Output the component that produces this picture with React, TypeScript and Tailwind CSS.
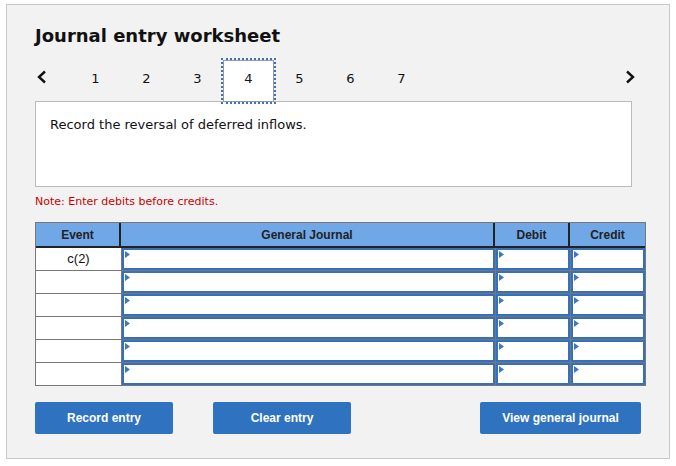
import React from 'react';

const verdana = { fontFamily: '"DejaVu Sans", Verdana, sans-serif' };
const arial = { fontFamily: '"Liberation Sans", Arial, sans-serif' };

const Marker: React.FC = () => (
  <svg className="absolute left-[1px] top-[1px]" width="6" height="8" viewBox="0 0 6 8">
    <polygon points="0,0 5,3.5 0,7" fill="#3a78c8" />
  </svg>
);

const InputCell: React.FC = () => (
  <div className="relative h-[22px] bg-white border-2 border-[#3570bd]">
    <Marker />
  </div>
);

const Chevron: React.FC<{ dir: 'left' | 'right' }> = ({ dir }) => (
  <svg width="12" height="14" viewBox="0 0 12 14">
    <polyline
      points={dir === 'left' ? '9,1.5 3,7 9,12.5' : '3,1.5 9,7 3,12.5'}
      fill="none"
      stroke="#111"
      strokeWidth="2.4"
    />
  </svg>
);

export default function App() {
  const tabs = [1, 2, 3, 4, 5, 6, 7];
  const rows = ['c(2)', '', '', '', '', ''];

  return (
    <div className="bg-white w-[676px] h-[466px] pt-[4px] pl-[6px]">
      <div className="w-[664px] h-[455px] border border-[#c8c8c8] bg-[#f2f2f2] pl-[28px] pt-[20px]">
        <h1 className="text-[18px] leading-[22px] font-bold text-[#111]" style={verdana}>
          Journal entry worksheet
        </h1>

        <div className="flex items-center h-[42px] mt-[13px]" style={verdana}>
          <div className="w-[35px] flex items-center pl-[1px] -mt-[8px]">
            <Chevron dir="left" />
          </div>
          {tabs.map(t =>
            t === 4 ? (
              <div
                key={t}
                className="w-[51px] h-[42px] flex items-center justify-center pb-[5px] bg-white border border-[#999] outline-2 outline-dotted outline-[#3a70c4] text-[13px] text-[#111]"
              >
                {t}
              </div>
            ) : (
              <div key={t} className="w-[51px] -mt-[5px] text-center text-[13px] text-[#111]">
                {t}
              </div>
            )
          )}
          <div className="flex-1" />
          <div className="mr-[33px] flex items-center -mt-[8px]">
            <Chevron dir="right" />
          </div>
        </div>

        <div
          className="w-[597px] h-[86px] -mt-[1px] bg-white border border-[#bbbbbb] pl-[14px] pt-[13px] text-[13px] text-[#111]"
          style={verdana}
        >
          Record the reversal of deferred inflows.
        </div>

        <p className="mt-[8px] text-[11px] leading-[14px] text-[#cc0000]" style={verdana}>
          Note: Enter debits before credits.
        </p>

        <div className="mt-[13px] w-[611px] border border-[#777]" style={arial}>
          <div className="grid grid-cols-[85px_374px_75px_75px] h-[25px] bg-[#70a8e7] border-b-2 border-[#222] text-[12px] font-bold text-[#222]">
            <div className="flex items-center justify-center border-r-2 border-[#222]">Event</div>
            <div className="flex items-center justify-center border-r-2 border-[#222]">General Journal</div>
            <div className="flex items-center justify-center border-r-2 border-[#222]">Debit</div>
            <div className="flex items-center justify-center">Credit</div>
          </div>
          <div className="grid grid-cols-[85px_373px_74px_74px] gap-px bg-[#777]">
            {rows.map((ev, i) => (
              <React.Fragment key={i}>
                <div className="h-[22px] bg-white flex items-center justify-center text-[13px] text-[#111]">
                  {ev}
                </div>
                <InputCell />
                <InputCell />
                <InputCell />
              </React.Fragment>
            ))}
          </div>
        </div>

        <div className="flex mt-[16px] text-[12px] font-bold text-white" style={arial}>
          <button className="w-[138px] h-[32px] rounded-[2px] bg-[#2f72c0]">Record entry</button>
          <button className="w-[138px] h-[32px] rounded-[2px] bg-[#2f72c0] ml-[40px]">Clear entry</button>
          <button className="w-[161px] h-[32px] rounded-[2px] bg-[#2f72c0] ml-[129px]">View general journal</button>
        </div>
      </div>
    </div>
  );
}
